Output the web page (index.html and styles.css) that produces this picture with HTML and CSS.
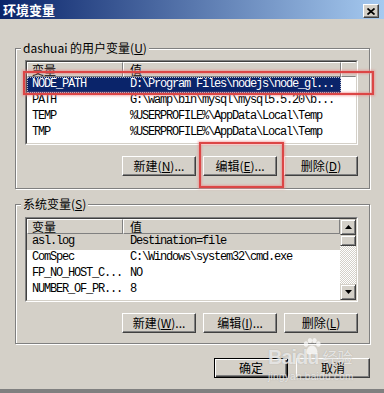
FILE: index.html
```html
<!doctype html>
<html>
<head>
<meta charset="utf-8">
<title>环境变量</title>
<link rel="stylesheet" href="styles.css">
</head>
<body>
<div class="window">
    <div class="titlebar">
        <span class="title">环境变量</span>
        <span class="close"><svg width="8" height="7" viewBox="0 0 8 7"><path d="M0.5 0.5 L7.5 6.5 M7.5 0.5 L0.5 6.5" stroke="#000" stroke-width="1.7"/></svg></span>
    </div>
    <div class="body">
        <fieldset class="group first">
            <legend>dashuai 的用户变量(<u>U</u>)</legend>
            <div class="list">
                <div class="list-in">
                    <div class="list-main">
                        <div class="head"><span class="c1">变量</span><span class="c2">值</span><span class="fill"></span></div>
                        <div class="row sel"><span class="c1">NODE_PATH</span><span class="c2">D:\Program Files\nodejs\node_gl...</span></div>
                        <div class="row"><span class="c1">PATH</span><span class="c2">G:\wamp\bin\mysql\mysql5.5.20\b...</span></div>
                        <div class="row"><span class="c1">TEMP</span><span class="c2">%USERPROFILE%\AppData\Local\Temp</span></div>
                        <div class="row"><span class="c1">TMP</span><span class="c2">%USERPROFILE%\AppData\Local\Temp</span></div>
                    </div>
                </div>
            </div>
            <div class="buttons">
                <button class="btn">新建(<u>N</u>)...</button>
                <button class="btn">编辑(<u>E</u>)...</button>
                <button class="btn">删除(<u>D</u>)</button>
            </div>
        </fieldset>

        <fieldset class="group second">
            <legend>系统变量(<u>S</u>)</legend>
            <div class="list">
                <div class="list-in">
                    <div class="list-main short">
                        <div class="head"><span class="c1">变量</span><span class="c2">值</span></div>
                        <div class="row idle"><span class="c1">asl.log</span><span class="c2">Destination=file</span></div>
                        <div class="row"><span class="c1">ComSpec</span><span class="c2">C:\Windows\system32\cmd.exe</span></div>
                        <div class="row"><span class="c1">FP_NO_HOST_C...</span><span class="c2">NO</span></div>
                        <div class="row"><span class="c1">NUMBER_OF_PR...</span><span class="c2">8</span></div>
                    </div>
                    <div class="scrollbar">
                        <span class="sb-btn"><svg width="7" height="4" viewBox="0 0 7 4"><polygon points="3.5,0 7,4 0,4"/></svg></span>
                        <span class="sb-btn thumb"></span>
                        <span class="track"></span>
                        <span class="sb-btn"><svg width="7" height="4" viewBox="0 0 7 4"><polygon points="0,0 7,0 3.5,4"/></svg></span>
                    </div>
                </div>
            </div>
            <div class="buttons">
                <button class="btn">新建(<u>W</u>)...</button>
                <button class="btn">编辑(<u>I</u>)...</button>
                <button class="btn">删除(<u>L</u>)</button>
            </div>
        </fieldset>

        <div class="footer">
            <button class="btn default">确定</button>
            <button class="btn">取消</button>
        </div>
    </div>

    <!-- 标注框 -->
    <div class="mark mark-row"></div>
    <div class="mark mark-btn"></div>

    <!-- 水印 -->
    <div class="watermark">
        <svg class="paw" width="20" height="18" viewBox="0 0 20 18">
            <ellipse cx="4" cy="6" rx="2.2" ry="2.8"/>
            <ellipse cx="8" cy="2.6" rx="2.2" ry="2.6"/>
            <ellipse cx="12.5" cy="2.6" rx="2.2" ry="2.6"/>
            <ellipse cx="16.4" cy="6" rx="2.2" ry="2.8"/>
            <path d="M10 7.5 C6.5 7.5 4.5 12 4.5 14 C4.5 16.5 7 17 10 16 C13 17 15.5 16.5 15.5 14 C15.5 12 13.5 7.5 10 7.5 Z"/>
        </svg>
        <div class="wm-main"><span class="wm-en">Baidu</span><span class="wm-cn">经验</span></div>
        <div class="wm-url">jingyan.baidu.com</div>
    </div>
</div>
</body>
</html>
```

FILE: styles.css
```css
* {margin:0; padding:0; box-sizing:border-box;}
body {width:384px; height:393px; overflow:hidden; background:#d4d0c8; color:#000; font:12px "Noto Sans CJK SC", "Liberation Sans", sans-serif;}

.window {position:relative; height:393px; border-bottom:4px solid #808080;}

/* 标题栏 */
.titlebar {display:flex; justify-content:space-between; align-items:flex-start; height:19px; padding:0 5px 0 3px; background:linear-gradient(to right, #0a246a, #a6caf0);}
.title {color:#fff; font-weight:bold; font-size:13px; line-height:19px;}
.close {display:flex; align-items:center; justify-content:center; width:16px; height:14px; margin-top:4px; background:#d4d0c8; border:1px solid; border-color:#fff #404040 #404040 #fff; box-shadow:inset -1px -1px #808080;}

.body {padding:0 14px 0 15px;}

/* 分组框 */
.group {width:355px; border:1px solid #808080; box-shadow:inset 1px 1px #fff, 1px 1px #fff; padding:5px 11px 12px 9px; min-inline-size:0;}
.group.first {margin-top:22px;}
.group.second {margin-top:8px; padding-top:6px; padding-bottom:10px;}
.group legend {margin-left:-4px; padding:0 2px; line-height:14px; background:#d4d0c8;}

/* 列表 */
.list {width:333px; height:85px; border:1px solid; border-color:#808080 #fff #fff #808080;}
.list-in {display:flex; height:100%; background:#fff; border:1px solid; border-color:#404040 #d4d0c8 #d4d0c8 #404040;}
.list-main {flex:1; overflow:hidden;}
.list-main.short {flex:none; width:313px;}

.head {display:flex; height:15px; background:#d4d0c8;}
.head span {height:15px; line-height:13px; border:1px solid; border-color:#fff #808080 #808080 #fff; white-space:nowrap;}
.head .c1 {width:96px; padding-left:4px;}
.head .c2 {width:218px; padding-left:6px;}
.short .head .c2 {width:217px;}
.head .fill {flex:1; border-right-color:#d4d0c8;}

.row {display:flex; width:314px; height:16px; line-height:16px; font:12px "Liberation Mono", monospace; letter-spacing:-1.2px; white-space:nowrap;}
.short .row {width:313px;}
.row .c1 {width:96px; padding-left:5px; overflow:hidden;}
.row .c2 {flex:1; padding-left:7px; overflow:hidden;}
.row.sel {background:#0a246a; color:#fff; outline:1px dotted #b8bcd0; outline-offset:-1px;}
.row.idle {background:#d4d0c8;}

/* 滚动条 */
.scrollbar {display:flex; flex-direction:column; width:16px; background:repeating-conic-gradient(#fff 0 25%, #d4d0c8 0 50%) 0 0/2px 2px;}
.sb-btn {display:flex; align-items:center; justify-content:center; height:16px; background:#d4d0c8; border:1px solid; border-color:#d4d0c8 #404040 #404040 #d4d0c8; box-shadow:inset 1px 1px #fff, inset -1px -1px #808080;}
.sb-btn.thumb {height:11px;}
.track {flex:1;}

/* 按钮 */
.buttons {display:flex; justify-content:flex-end; gap:7px; margin-top:11px;}
.btn {width:74px; height:20px; background:#d4d0c8; color:#000; font:12px "Noto Sans CJK SC", "Liberation Sans", sans-serif; line-height:18px; text-align:center; border:1px solid; border-color:#fff #404040 #404040 #fff; box-shadow:inset -1px -1px #808080;}
.btn.default {border-color:#000; box-shadow:inset 1px 1px #fff, inset -1px -1px #404040, inset -2px -2px #808080;}

.footer {display:flex; justify-content:flex-end; gap:8px; margin-top:14px;}

/* 红色标注 */
.mark {position:absolute; border:2px solid #dc4646; box-shadow:0 0 2px 1px rgba(236,130,130,.6), inset 0 0 2px 1px rgba(236,130,130,.6);}
.mark-row {left:23px; top:71px; width:351px; height:24px;}
.mark-btn {left:199px; top:142px; width:85px; height:46px;}

/* 水印 */
.watermark {position:absolute; left:268px; top:338px; width:90px; color:rgba(255,255,255,.7); text-shadow:0 0 1px rgba(120,120,120,.5);}
.paw {position:absolute; left:34px; top:0; fill:rgba(255,255,255,.7);}
.wm-main {display:flex; align-items:center; height:18px; margin-top:10px; line-height:18px;}
.wm-en {font:bold 20px/18px "Liberation Sans", sans-serif; letter-spacing:-1px;}
.wm-cn {margin-left:4px; font-size:15px; line-height:18px;}
.wm-url {margin-top:5px; font:10px/11px "Liberation Sans", sans-serif; letter-spacing:.3px;}
```
